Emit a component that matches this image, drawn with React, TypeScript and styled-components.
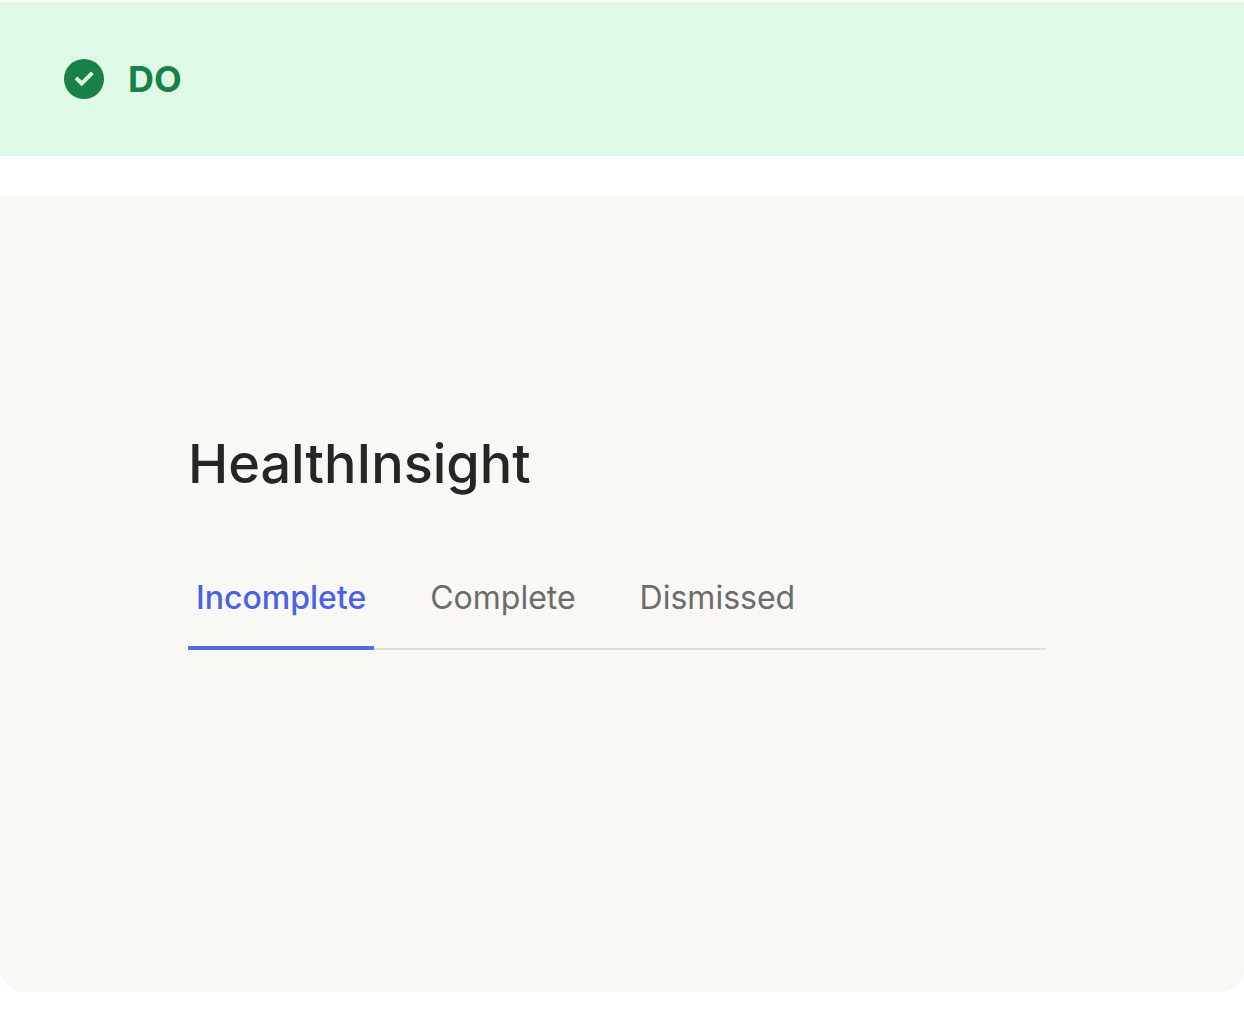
import React, { useState } from "react";
import styled, { createGlobalStyle } from "styled-components";

const GlobalStyle = createGlobalStyle`
  * { box-sizing: border-box; }
  body { margin: 0; background: #ffffff; font-family: Inter, "Liberation Sans", sans-serif; }
`;

const Page = styled.main`
  padding: 2px 0 30px;
  display: flex;
  flex-direction: column;
  gap: 40px;
`;

const Banner = styled.header`
  display: flex;
  align-items: center;
  gap: 24px;
  padding: 56px 64px;
  background: #def9e6;
  color: #188048;
`;

const BannerLabel = styled.strong`
  font-size: 36px;
  line-height: 42px;
  font-weight: 700;
`;

const Example = styled.section`
  padding: 232px 198px 342px 188px;
  background: #f9f8f4;
  border-radius: 0 0 24px 24px;
`;

const Title = styled.h1`
  margin: 0 0 64px;
  font-size: 54px;
  line-height: 72px;
  font-weight: 500;
  color: #262626;
`;

const TabList = styled.div`
  display: flex;
  gap: 48px;
  box-shadow: inset 0 -2px 0 #e0dfe0;
`;

const Tab = styled.button<{ $active: boolean }>`
  border: 0;
  border-bottom: 4px solid ${(p) => (p.$active ? "#526be9" : "transparent")};
  background: none;
  padding: 14px 8px 28px;
  font-family: inherit;
  font-size: 32px;
  line-height: 40px;
  font-weight: ${(p) => (p.$active ? 500 : 400)};
  color: ${(p) => (p.$active ? "#4a63e4" : "#6c6c6c")};
  cursor: pointer;
`;

const tabs = ["Incomplete", "Complete", "Dismissed"];

function CheckBadge() {
  return (
    <svg width="40" height="40" viewBox="0 0 40 40" aria-hidden="true">
      <circle cx="20" cy="20" r="20" fill="#188048" />
      <path d="M12 18.8L17.7 24.5L28.4 13.8" fill="none" stroke="#def9e6" strokeWidth="4" />
    </svg>
  );
}

export default function App() {
  const [active, setActive] = useState("Incomplete");
  return (
    <>
      <GlobalStyle />
      <Page>
        <Banner>
          <CheckBadge />
          <BannerLabel>DO</BannerLabel>
        </Banner>
        <Example>
          <Title>HealthInsight</Title>
          <TabList role="tablist">
            {tabs.map((name) => (
              <Tab
                key={name}
                type="button"
                role="tab"
                aria-selected={active === name}
                $active={active === name}
                onClick={() => setActive(name)}
              >
                {name}
              </Tab>
            ))}
          </TabList>
        </Example>
      </Page>
    </>
  );
}
